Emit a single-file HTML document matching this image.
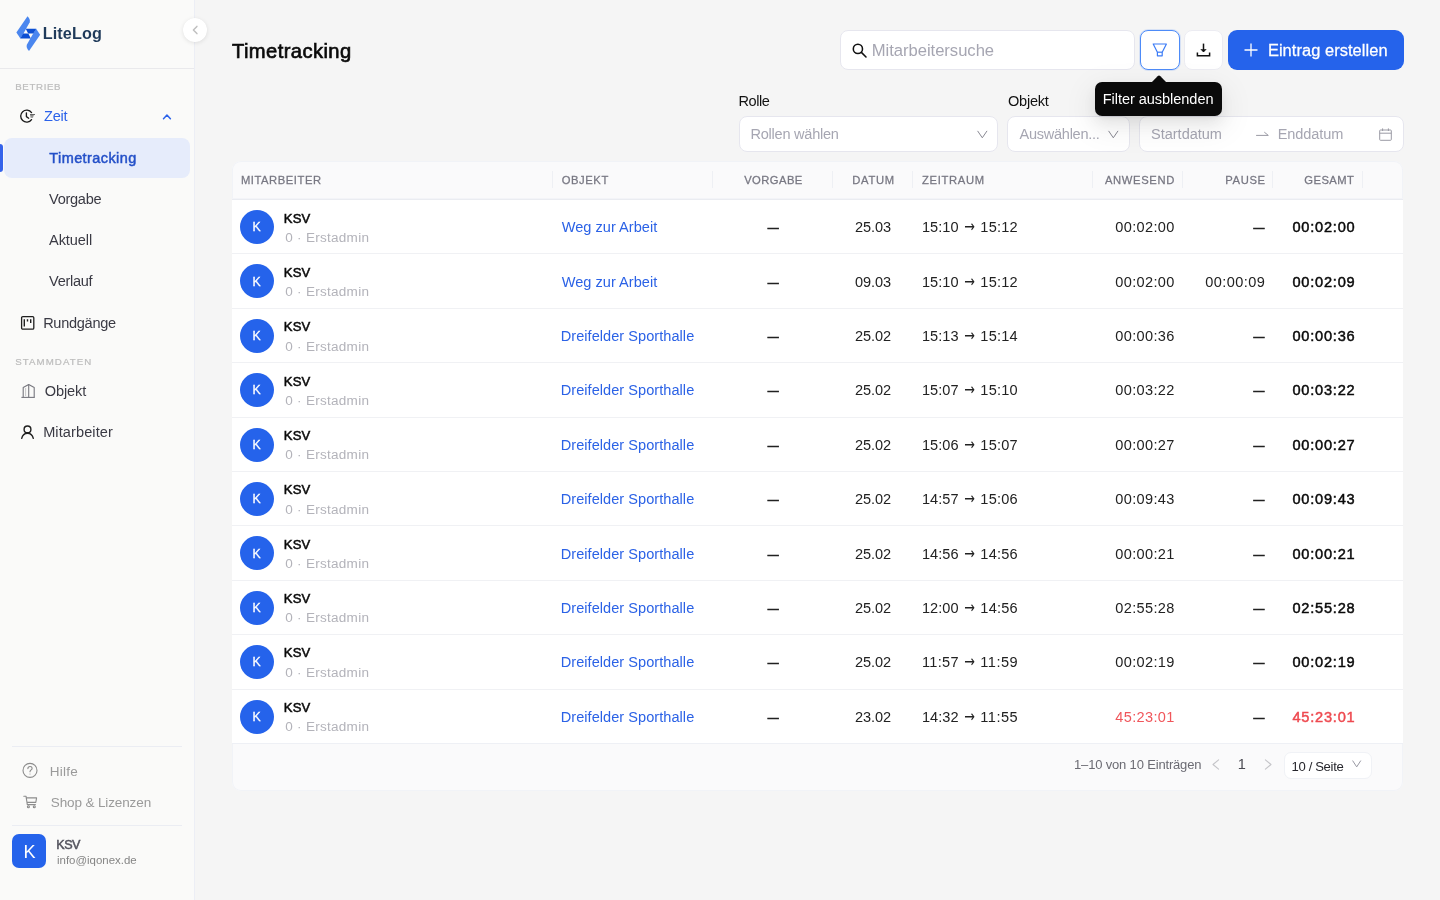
<!DOCTYPE html>
<html lang="de">
<head>
<meta charset="utf-8">
<title>LiteLog – Timetracking</title>
<style>

*{box-sizing:border-box;margin:0;padding:0}
html,body{width:1440px;height:900px;overflow:hidden}
body{position:relative;background:#f5f5f5;font-family:"Liberation Sans",sans-serif;color:#111}
.t{position:absolute;white-space:pre;display:block;font-weight:400}
.a{position:absolute;display:block}
svg{position:absolute;display:block;overflow:visible}
.sbg{position:absolute;left:0;top:0;width:195px;height:900px;background:#fafaf9;border-right:1px solid #eceef5}
aside,header,section,main{position:absolute;left:0;top:0;width:1440px;height:900px;will-change:transform}
.hr{position:absolute;height:1px;background:#ebedf3}
.box{position:absolute;background:#fff;border:1px solid #e6e6ee;border-radius:8px}

</style>
</head>
<body>
<div class="sbg"></div>
<aside>
<svg style="left:10px;top:10px" width="100" height="50" viewBox="0 0 1440 720" aria-hidden="true">
<path d="M252,90 Q296,130 284,178 L192,343 L150,410 L92,325 Z" fill="#4a86ef"/>
<path d="M274,590 Q230,550 242,502 L334,337 L376,270 L434,355 Z" fill="#4a86ef"/>
<path d="M226,270 L378,270 L336,340 L262,340 Z" fill="#0d4fd3"/>
<path d="M300,410 L148,410 L190,340 L264,340 Z" fill="#0d4fd3"/>
</svg>
<span class="t" style="left:42.65px;top:22.00px;font-size:16.22px;line-height:23px;color:#1f3a5a;font-weight:700;letter-spacing:0.133px;">LiteLog</span>
<div class="hr" style="left:0;top:68px;width:194px;background:#e9e9ec"></div>
<span class="t" style="left:15.16px;top:80.00px;font-size:9.7px;line-height:14px;color:#bdbdbd;-webkit-text-stroke:0.23px;letter-spacing:0.663px;">BETRIEB</span>
<svg style="left:19px;top:108px" width="16" height="16" viewBox="0 0 16 16" fill="none" stroke="#1a1a1a" stroke-width="1.35" stroke-linecap="round" aria-hidden="true">
<path d="M12.55,4.57 A6,6 0 1 0 12.55,11.63"/>
<path d="M7.4,4.8 V8.6 L9.7,10.2" stroke-linejoin="round"/>
<path d="M11.4,6.55 H15.6 M11.6,7.8 H14.3 M11.9,9.05 H13.7" stroke-width="0.8" stroke="#333"/>
</svg>
<span class="t" style="left:44.05px;top:106.00px;font-size:14.56px;line-height:20px;color:#2b62ea;letter-spacing:-0.269px;">Zeit</span>
<svg style="left:162px;top:113px" width="10" height="8" viewBox="0 0 10 8" fill="none" stroke="#2b62ea" stroke-width="1.5" stroke-linecap="round" stroke-linejoin="round" aria-hidden="true"><path d="M1.5,5.7 L4.95,2.0 L8.4,5.7"/></svg>
<div class="a" style="left:4px;top:138px;width:186px;height:40px;border-radius:8px;background:#e6ecfb"></div>
<div class="a" style="left:0;top:144px;width:3px;height:28px;border-radius:0 3px 3px 0;background:#3563ea"></div>
<span class="t" style="left:49.29px;top:148.00px;font-size:14.49px;line-height:20px;color:#2450c8;-webkit-text-stroke:0.47px;letter-spacing:0.419px;">Timetracking</span>
<span class="t" style="left:49.05px;top:189.00px;font-size:14.56px;line-height:20px;color:#3a3a44;letter-spacing:-0.285px;">Vorgabe</span>
<span class="t" style="left:49.05px;top:230.00px;font-size:14.56px;line-height:20px;color:#3a3a44;letter-spacing:-0.090px;">Aktuell</span>
<span class="t" style="left:49.05px;top:271.00px;font-size:14.56px;line-height:20px;color:#3a3a44;letter-spacing:-0.309px;">Verlauf</span>
<svg style="left:20px;top:315px" width="16" height="16" viewBox="0 0 16 16" fill="none" stroke="#1f1f1f" stroke-width="1.3" aria-hidden="true">
<rect x="1.6" y="1.6" width="12.2" height="12.6" rx="1.2"/>
<path d="M4.3,4.2 V11.6 M7.5,4.2 V6.6 M10.7,4.2 V8" stroke-width="1.4"/>
</svg>
<span class="t" style="left:43.15px;top:313.00px;font-size:14.56px;line-height:20px;color:#3a3a44;letter-spacing:-0.281px;">Rundgänge</span>
<span class="t" style="left:15.26px;top:355.00px;font-size:9.7px;line-height:14px;color:#bdbdbd;-webkit-text-stroke:0.23px;letter-spacing:1.066px;">STAMMDATEN</span>
<svg style="left:20px;top:383px" width="16" height="16" viewBox="0 0 16 16" fill="none" stroke="#77777f" stroke-width="1.1" stroke-linejoin="round" aria-hidden="true">
<path d="M1.4,14.4 H14.8"/>
<path d="M3.2,14.2 V4.6 L8.7,1.6 L14.2,4.6 V14.2"/>
<path d="M8.7,1.4 V14.2"/>
<path d="M5.6,5.5 V13" stroke-dasharray="1 1" stroke-width="0.8"/>
</svg>
<span class="t" style="left:44.85px;top:381.00px;font-size:14.56px;line-height:20px;color:#3a3a44;letter-spacing:-0.121px;">Objekt</span>
<svg style="left:20px;top:424px" width="16" height="16" viewBox="0 0 16 16" fill="none" stroke="#1f1f1f" stroke-width="1.4" stroke-linecap="round" aria-hidden="true">
<circle cx="7.5" cy="5.4" r="3.4"/>
<path d="M1.7,14.3 C2.6,10.6 5,9.2 7.5,9.2 C10,9.2 12.4,10.6 13.3,14.3"/>
</svg>
<span class="t" style="left:43.15px;top:422.00px;font-size:14.56px;line-height:20px;color:#3a3a44;letter-spacing:0.103px;">Mitarbeiter</span>
<div class="hr" style="left:12px;top:746px;width:170px"></div>
<svg style="left:22px;top:762px" width="16" height="16" viewBox="0 0 16 16" fill="none" stroke="#8c8c8c" stroke-width="1.1" stroke-linecap="round" aria-hidden="true">
<circle cx="8" cy="8.4" r="7"/>
<path d="M5.9,6.6 C5.9,5.2 6.9,4.5 8,4.5 C9.2,4.5 10.1,5.3 10.1,6.4 C10.1,7.9 8,8 8,9.8"/>
<circle cx="8" cy="12" r="0.5" fill="#8c8c8c" stroke="none"/>
</svg>
<span class="t" style="left:49.75px;top:762.00px;font-size:13.52px;line-height:19px;color:#9a9a9a;letter-spacing:0.217px;">Hilfe</span>
<svg style="left:23px;top:795px" width="15" height="14" viewBox="0 0 15 14" fill="none" stroke="#8c8c8c" stroke-width="1.1" stroke-linecap="round" stroke-linejoin="round" aria-hidden="true">
<path d="M0.8,1.2 H3 L4.3,9.6 H12.4 M3.4,2.9 H13.6 L12.8,7.4 H4.1"/>
<circle cx="5.4" cy="11.8" r="1" />
<circle cx="11.3" cy="11.8" r="1" />
</svg>
<span class="t" style="left:50.75px;top:793.00px;font-size:13.52px;line-height:19px;color:#9a9a9a;letter-spacing:-0.128px;">Shop &amp; Lizenzen</span>
<div class="hr" style="left:12px;top:825px;width:170px"></div>
<div class="a" style="left:12px;top:834px;width:34px;height:34px;border-radius:7px;background:#2563eb"></div>
<span class="t" style="left:23.45px;top:840.00px;font-size:18.1px;line-height:25px;color:#fff;">K</span>
<span class="t" style="left:56.30px;top:836.00px;font-size:12.6px;line-height:18px;color:#54545e;-webkit-text-stroke:0.5px;letter-spacing:-0.552px;">KSV</span>
<span class="t" style="left:57.05px;top:852.00px;font-size:11.44px;line-height:16px;color:#858585;letter-spacing:-0.007px;">info@iqonex.de</span>
</aside>
<div class="a" style="left:183px;top:18px;width:24px;height:24px;border-radius:50%;background:#fff;box-shadow:0 1px 4px rgba(0,0,0,.10),0 0 1px rgba(0,0,0,.06)"></div>
<svg style="left:191px;top:25px" width="7" height="10" viewBox="0 0 7 10" fill="none" stroke="#c0c0c0" stroke-width="1.5" stroke-linecap="round" stroke-linejoin="round" aria-hidden="true"><path d="M5.9,1.4 L2.4,5 L5.9,8.6"/></svg>
<header>
<h1 class="t" style="left:231.98px;top:37.00px;font-size:20.17px;line-height:28px;color:#0a0a0a;-webkit-text-stroke:0.66px;letter-spacing:0.420px;">Timetracking</h1>
<div class="box" style="left:840px;top:30px;width:295px;height:40px;border-color:#e6e6ee"></div>
<svg style="left:852px;top:43px" width="15" height="15" viewBox="0 0 15 15" fill="none" stroke="#111" stroke-width="1.55" stroke-linecap="round" aria-hidden="true">
<circle cx="5.9" cy="5.9" r="4.6"/><path d="M9.4,9.4 L14,14"/></svg>
<span class="t" style="left:871.75px;top:39.00px;font-size:16.64px;line-height:23px;color:#a6a6b2;letter-spacing:-0.037px;">Mitarbeitersuche</span>
<div class="box" style="left:1140px;top:30px;width:40px;height:40px;border-color:#4d8bf8;box-shadow:0 0 0 1px rgba(77,139,248,.18)"></div>
<svg style="left:1152px;top:43px" width="16" height="14" viewBox="0 0 16 14" fill="none" stroke="#3b7bf6" stroke-width="1.2" stroke-linejoin="round" aria-hidden="true">
<path d="M1.2,1 H14.4 L10.2,9.2 V12.8 H5.4 V9.2 Z"/><path d="M5.4,9.2 H10.2"/></svg>
<div class="box" style="left:1184px;top:30px;width:39px;height:40px;border-color:#ececf2"></div>
<svg style="left:1196px;top:43px" width="15" height="14" viewBox="0 0 15 14" fill="none" stroke="#111" stroke-width="1.5" aria-hidden="true">
<path d="M7.5,0.6 V8.4"/><path d="M4.9,6.2 L7.5,8.9 L10.1,6.2" fill="#111" stroke-width="1"/><path d="M1.4,9.4 V12.8 H13.6 V9.4" stroke-width="1.5"/></svg>
<div class="a" style="left:1227.6px;top:30px;width:176.3px;height:40px;border-radius:9px;background:#2563eb"></div>
<svg style="left:1244px;top:43px" width="14" height="14" viewBox="0 0 14 14" stroke="#fff" stroke-width="1.3" aria-hidden="true"><path d="M7,0.5 V13.5 M0.5,7 H13.5"/></svg>
<span class="t" style="left:1267.88px;top:39.00px;font-size:16.44px;line-height:23px;color:#fff;-webkit-text-stroke:0.26px;letter-spacing:0.056px;">Eintrag erstellen</span>
</header>
<section>
<span class="t" style="left:738.45px;top:91.00px;font-size:14.56px;line-height:20px;color:#111;letter-spacing:-0.416px;">Rolle</span>
<span class="t" style="left:1007.95px;top:91.00px;font-size:14.56px;line-height:20px;color:#111;letter-spacing:-0.221px;">Objekt</span>
<div class="box" style="left:738.6px;top:116px;width:259px;height:36px;border-color:#e6e6ee"></div>
<span class="t" style="left:750.45px;top:124.00px;font-size:14.56px;line-height:20px;color:#a6a6b2;letter-spacing:-0.242px;">Rollen wählen</span>
<svg style="left:976.5px;top:130px" width="11" height="9" viewBox="0 0 11 9" fill="none" stroke="#8a8a94" stroke-width="1" stroke-linecap="round" stroke-linejoin="round" aria-hidden="true"><path d="M0.8,1.2 L5.3,7.8 L9.8,1.2"/></svg>
<div class="box" style="left:1007px;top:116px;width:122.5px;height:36px;border-color:#e6e6ee"></div>
<span class="t" style="left:1019.45px;top:124.00px;font-size:14.56px;line-height:20px;color:#a6a6b2;letter-spacing:-0.260px;">Auswählen...</span>
<svg style="left:1108px;top:130px" width="11" height="9" viewBox="0 0 11 9" fill="none" stroke="#8a8a94" stroke-width="1" stroke-linecap="round" stroke-linejoin="round" aria-hidden="true"><path d="M0.8,1.2 L5.3,7.8 L9.8,1.2"/></svg>
<div class="box" style="left:1138.5px;top:116px;width:265.5px;height:36px;border-color:#e6e6ee"></div>
<span class="t" style="left:1151.05px;top:124.00px;font-size:14.56px;line-height:20px;color:#a6a6b2;letter-spacing:-0.027px;">Startdatum</span>
<svg style="left:1256px;top:130px" width="13" height="8" viewBox="0 0 13 8" fill="none" stroke="#9a9aa4" stroke-width="1" stroke-linecap="round" aria-hidden="true"><path d="M0.5,5.4 H12.3 L8.6,2.4"/></svg>
<span class="t" style="left:1277.75px;top:124.00px;font-size:14.56px;line-height:20px;color:#a6a6b2;letter-spacing:-0.116px;">Enddatum</span>
<svg style="left:1379px;top:127.5px" width="13" height="13" viewBox="0 0 13 13" fill="none" stroke="#9a9aa4" stroke-width="1" aria-hidden="true"><rect x="0.7" y="2" width="11.6" height="10.3" rx="0.8"/><path d="M0.7,5.2 H12.3 M3.6,0.4 V3 M9.4,0.4 V3"/></svg>
<div class="a" style="left:1095px;top:82px;width:127px;height:34px;border-radius:7px;background:#0a0a0a;box-shadow:0 6px 16px 0 rgba(0,0,0,.08),0 3px 6px -4px rgba(0,0,0,.12),0 9px 28px 8px rgba(0,0,0,.05)"></div>
<svg style="left:1151px;top:75px" width="16" height="8" viewBox="0 0 16 8" aria-hidden="true"><path d="M0,8 L6.6,1.2 Q8,0 9.4,1.2 L16,8 Z" fill="#0a0a0a"/></svg>
<span class="t" style="left:1102.75px;top:89.00px;font-size:14.56px;line-height:20px;color:#fff;letter-spacing:-0.051px;">Filter ausblenden</span>
</section>
<main>
<div class="a" style="left:232px;top:161px;width:1171px;height:630px;border-radius:9px;background:#fafafb;overflow:hidden;box-shadow:inset 0 0 0 1px #f1f3f7">
<div class="a" style="left:0;top:37px;width:1171px;height:1px;background:#f3f4f8"></div>
<div class="a" style="left:0;top:38px;width:1171px;height:545px;background:#fff;border-top:1px solid #eaecf1;border-bottom:1px solid #eef0f5"></div>
<div class="a" style="left:0;top:92px;width:1171px;height:1px;background:#f0f1f4"></div>
<div class="a" style="left:0;top:147px;width:1171px;height:1px;background:#f0f1f4"></div>
<div class="a" style="left:0;top:201px;width:1171px;height:1px;background:#f0f1f4"></div>
<div class="a" style="left:0;top:256px;width:1171px;height:1px;background:#f0f1f4"></div>
<div class="a" style="left:0;top:310px;width:1171px;height:1px;background:#f0f1f4"></div>
<div class="a" style="left:0;top:364px;width:1171px;height:1px;background:#f0f1f4"></div>
<div class="a" style="left:0;top:419px;width:1171px;height:1px;background:#f0f1f4"></div>
<div class="a" style="left:0;top:473px;width:1171px;height:1px;background:#f0f1f4"></div>
<div class="a" style="left:0;top:528px;width:1171px;height:1px;background:#f0f1f4"></div>
<div class="a" style="left:320px;top:10px;width:1px;height:17px;background:#eef0f4"></div>
<div class="a" style="left:480px;top:10px;width:1px;height:17px;background:#eef0f4"></div>
<div class="a" style="left:600px;top:10px;width:1px;height:17px;background:#eef0f4"></div>
<div class="a" style="left:680px;top:10px;width:1px;height:17px;background:#eef0f4"></div>
<div class="a" style="left:860px;top:10px;width:1px;height:17px;background:#eef0f4"></div>
<div class="a" style="left:950px;top:10px;width:1px;height:17px;background:#eef0f4"></div>
<div class="a" style="left:1040px;top:10px;width:1px;height:17px;background:#eef0f4"></div>
<div class="a" style="left:1130px;top:10px;width:1px;height:17px;background:#eef0f4"></div>
</div>
<span class="t" style="left:240.88px;top:172.00px;font-size:11.23px;line-height:16px;color:#777782;-webkit-text-stroke:0.26px;letter-spacing:0.565px;">MITARBEITER</span>
<span class="t" style="left:561.78px;top:172.00px;font-size:11.23px;line-height:16px;color:#777782;-webkit-text-stroke:0.26px;letter-spacing:0.570px;">OBJEKT</span>
<span class="t" style="left:744.13px;top:172.00px;font-size:11.23px;line-height:16px;color:#777782;-webkit-text-stroke:0.26px;letter-spacing:0.454px;">VORGABE</span>
<span class="t" style="left:852.13px;top:172.00px;font-size:11.23px;line-height:16px;color:#777782;-webkit-text-stroke:0.26px;letter-spacing:0.756px;">DATUM</span>
<span class="t" style="left:922.08px;top:172.00px;font-size:11.23px;line-height:16px;color:#777782;-webkit-text-stroke:0.26px;letter-spacing:0.663px;">ZEITRAUM</span>
<span class="t" style="left:1104.93px;top:172.00px;font-size:11.23px;line-height:16px;color:#777782;-webkit-text-stroke:0.26px;letter-spacing:0.645px;">ANWESEND</span>
<span class="t" style="left:1225.33px;top:172.00px;font-size:11.23px;line-height:16px;color:#777782;-webkit-text-stroke:0.26px;letter-spacing:0.630px;">PAUSE</span>
<span class="t" style="left:1304.33px;top:172.00px;font-size:11.23px;line-height:16px;color:#777782;-webkit-text-stroke:0.26px;letter-spacing:0.444px;">GESAMT</span>
<div class="a" style="left:240px;top:210.0px;width:34px;height:34px;border-radius:50%;background:#2563eb"></div>
<span class="t" style="left:252.50px;top:219.00px;font-size:12.25px;line-height:17px;color:#fff;-webkit-text-stroke:0.29px;">K</span>
<span class="t" style="left:283.71px;top:210.00px;font-size:13.1px;line-height:18px;color:#0a0a0a;-webkit-text-stroke:0.52px;letter-spacing:0.205px;">KSV</span>
<span class="t" style="left:285.25px;top:228.00px;font-size:13.52px;line-height:19px;color:#b3b3ba;letter-spacing:0.278px;">0 · Erstadmin</span>
<span class="t" style="left:561.75px;top:217.00px;font-size:14.56px;line-height:20px;color:#2b62e6;letter-spacing:0.023px;">Weg zur Arbeit</span>
<span class="t" style="left:765.55px;top:217.00px;font-size:14.56px;line-height:20px;color:#222;-webkit-text-stroke:.3px;transform:translateY(-.5px) scaleX(.78);">—</span>
<span class="t" style="left:855.00px;top:217.00px;font-size:14.56px;line-height:20px;color:#222;letter-spacing:-0.079px;">25.03</span>
<span class="t" style="left:921.95px;top:217.00px;font-size:14.56px;line-height:20px;color:#222;letter-spacing:0.071px;">15:10</span>
<span class="t" style="left:963.30px;top:216.00px;font-size:16.02px;line-height:22px;color:#222;font-family:'DejaVu Sans',sans-serif;transform:translateY(.3px) scaleX(.8);">→</span>
<span class="t" style="left:980.30px;top:217.00px;font-size:14.56px;line-height:20px;color:#222;letter-spacing:0.246px;">15:12</span>
<span class="t" style="left:1115.30px;top:217.00px;font-size:14.56px;line-height:20px;color:#222;letter-spacing:0.352px;">00:02:00</span>
<span class="t" style="left:1250.00px;top:217.00px;font-size:14.56px;line-height:20px;color:#222;-webkit-text-stroke:.3px;transform:translateY(-.5px) scaleX(.78);transform-origin:right;">—</span>
<span class="t" style="left:1292.44px;top:217.00px;font-size:14.6px;line-height:20px;color:#0a0a0a;-webkit-text-stroke:0.48px;letter-spacing:0.775px;">00:02:00</span>
<div class="a" style="left:240px;top:264.4px;width:34px;height:34px;border-radius:50%;background:#2563eb"></div>
<span class="t" style="left:252.50px;top:274.00px;font-size:12.25px;line-height:17px;color:#fff;-webkit-text-stroke:0.29px;">K</span>
<span class="t" style="left:283.71px;top:264.00px;font-size:13.1px;line-height:18px;color:#0a0a0a;-webkit-text-stroke:0.52px;letter-spacing:0.205px;">KSV</span>
<span class="t" style="left:285.25px;top:282.00px;font-size:13.52px;line-height:19px;color:#b3b3ba;letter-spacing:0.278px;">0 · Erstadmin</span>
<span class="t" style="left:561.75px;top:272.00px;font-size:14.56px;line-height:20px;color:#2b62e6;letter-spacing:0.023px;">Weg zur Arbeit</span>
<span class="t" style="left:765.55px;top:272.00px;font-size:14.56px;line-height:20px;color:#222;-webkit-text-stroke:.3px;transform:translateY(-.5px) scaleX(.78);">—</span>
<span class="t" style="left:855.00px;top:272.00px;font-size:14.56px;line-height:20px;color:#222;letter-spacing:-0.079px;">09.03</span>
<span class="t" style="left:921.95px;top:272.00px;font-size:14.56px;line-height:20px;color:#222;letter-spacing:0.071px;">15:10</span>
<span class="t" style="left:963.30px;top:271.00px;font-size:16.02px;line-height:22px;color:#222;font-family:'DejaVu Sans',sans-serif;transform:translateY(.3px) scaleX(.8);">→</span>
<span class="t" style="left:980.30px;top:272.00px;font-size:14.56px;line-height:20px;color:#222;letter-spacing:0.246px;">15:12</span>
<span class="t" style="left:1115.30px;top:272.00px;font-size:14.56px;line-height:20px;color:#222;letter-spacing:0.352px;">00:02:00</span>
<span class="t" style="left:1205.20px;top:272.00px;font-size:14.56px;line-height:20px;color:#222;letter-spacing:0.438px;">00:00:09</span>
<span class="t" style="left:1292.44px;top:272.00px;font-size:14.6px;line-height:20px;color:#0a0a0a;-webkit-text-stroke:0.48px;letter-spacing:0.775px;">00:02:09</span>
<div class="a" style="left:240px;top:318.8px;width:34px;height:34px;border-radius:50%;background:#2563eb"></div>
<span class="t" style="left:252.50px;top:328.00px;font-size:12.25px;line-height:17px;color:#fff;-webkit-text-stroke:0.29px;">K</span>
<span class="t" style="left:283.71px;top:318.00px;font-size:13.1px;line-height:18px;color:#0a0a0a;-webkit-text-stroke:0.52px;letter-spacing:0.205px;">KSV</span>
<span class="t" style="left:285.25px;top:337.00px;font-size:13.52px;line-height:19px;color:#b3b3ba;letter-spacing:0.278px;">0 · Erstadmin</span>
<span class="t" style="left:560.75px;top:326.00px;font-size:14.56px;line-height:20px;color:#2b62e6;letter-spacing:0.044px;">Dreifelder Sporthalle</span>
<span class="t" style="left:765.55px;top:326.00px;font-size:14.56px;line-height:20px;color:#222;-webkit-text-stroke:.3px;transform:translateY(-.5px) scaleX(.78);">—</span>
<span class="t" style="left:855.00px;top:326.00px;font-size:14.56px;line-height:20px;color:#222;letter-spacing:-0.079px;">25.02</span>
<span class="t" style="left:921.95px;top:326.00px;font-size:14.56px;line-height:20px;color:#222;letter-spacing:0.071px;">15:13</span>
<span class="t" style="left:963.30px;top:325.00px;font-size:16.02px;line-height:22px;color:#222;font-family:'DejaVu Sans',sans-serif;transform:translateY(.3px) scaleX(.8);">→</span>
<span class="t" style="left:980.30px;top:326.00px;font-size:14.56px;line-height:20px;color:#222;letter-spacing:0.246px;">15:14</span>
<span class="t" style="left:1115.30px;top:326.00px;font-size:14.56px;line-height:20px;color:#222;letter-spacing:0.352px;">00:00:36</span>
<span class="t" style="left:1250.00px;top:326.00px;font-size:14.56px;line-height:20px;color:#222;-webkit-text-stroke:.3px;transform:translateY(-.5px) scaleX(.78);transform-origin:right;">—</span>
<span class="t" style="left:1292.44px;top:326.00px;font-size:14.6px;line-height:20px;color:#0a0a0a;-webkit-text-stroke:0.48px;letter-spacing:0.775px;">00:00:36</span>
<div class="a" style="left:240px;top:373.2px;width:34px;height:34px;border-radius:50%;background:#2563eb"></div>
<span class="t" style="left:252.50px;top:382.00px;font-size:12.25px;line-height:17px;color:#fff;-webkit-text-stroke:0.29px;">K</span>
<span class="t" style="left:283.71px;top:373.00px;font-size:13.1px;line-height:18px;color:#0a0a0a;-webkit-text-stroke:0.52px;letter-spacing:0.205px;">KSV</span>
<span class="t" style="left:285.25px;top:391.00px;font-size:13.52px;line-height:19px;color:#b3b3ba;letter-spacing:0.278px;">0 · Erstadmin</span>
<span class="t" style="left:560.75px;top:380.00px;font-size:14.56px;line-height:20px;color:#2b62e6;letter-spacing:0.044px;">Dreifelder Sporthalle</span>
<span class="t" style="left:765.55px;top:380.00px;font-size:14.56px;line-height:20px;color:#222;-webkit-text-stroke:.3px;transform:translateY(-.5px) scaleX(.78);">—</span>
<span class="t" style="left:855.00px;top:380.00px;font-size:14.56px;line-height:20px;color:#222;letter-spacing:-0.079px;">25.02</span>
<span class="t" style="left:921.95px;top:380.00px;font-size:14.56px;line-height:20px;color:#222;letter-spacing:0.071px;">15:07</span>
<span class="t" style="left:963.30px;top:379.00px;font-size:16.02px;line-height:22px;color:#222;font-family:'DejaVu Sans',sans-serif;transform:translateY(.3px) scaleX(.8);">→</span>
<span class="t" style="left:980.30px;top:380.00px;font-size:14.56px;line-height:20px;color:#222;letter-spacing:0.246px;">15:10</span>
<span class="t" style="left:1115.30px;top:380.00px;font-size:14.56px;line-height:20px;color:#222;letter-spacing:0.352px;">00:03:22</span>
<span class="t" style="left:1250.00px;top:380.00px;font-size:14.56px;line-height:20px;color:#222;-webkit-text-stroke:.3px;transform:translateY(-.5px) scaleX(.78);transform-origin:right;">—</span>
<span class="t" style="left:1292.44px;top:380.00px;font-size:14.6px;line-height:20px;color:#0a0a0a;-webkit-text-stroke:0.48px;letter-spacing:0.775px;">00:03:22</span>
<div class="a" style="left:240px;top:427.6px;width:34px;height:34px;border-radius:50%;background:#2563eb"></div>
<span class="t" style="left:252.50px;top:437.00px;font-size:12.25px;line-height:17px;color:#fff;-webkit-text-stroke:0.29px;">K</span>
<span class="t" style="left:283.71px;top:427.00px;font-size:13.1px;line-height:18px;color:#0a0a0a;-webkit-text-stroke:0.52px;letter-spacing:0.205px;">KSV</span>
<span class="t" style="left:285.25px;top:445.00px;font-size:13.52px;line-height:19px;color:#b3b3ba;letter-spacing:0.278px;">0 · Erstadmin</span>
<span class="t" style="left:560.75px;top:435.00px;font-size:14.56px;line-height:20px;color:#2b62e6;letter-spacing:0.044px;">Dreifelder Sporthalle</span>
<span class="t" style="left:765.55px;top:435.00px;font-size:14.56px;line-height:20px;color:#222;-webkit-text-stroke:.3px;transform:translateY(-.5px) scaleX(.78);">—</span>
<span class="t" style="left:855.00px;top:435.00px;font-size:14.56px;line-height:20px;color:#222;letter-spacing:-0.079px;">25.02</span>
<span class="t" style="left:921.95px;top:435.00px;font-size:14.56px;line-height:20px;color:#222;letter-spacing:0.071px;">15:06</span>
<span class="t" style="left:963.30px;top:434.00px;font-size:16.02px;line-height:22px;color:#222;font-family:'DejaVu Sans',sans-serif;transform:translateY(.3px) scaleX(.8);">→</span>
<span class="t" style="left:980.30px;top:435.00px;font-size:14.56px;line-height:20px;color:#222;letter-spacing:0.246px;">15:07</span>
<span class="t" style="left:1115.30px;top:435.00px;font-size:14.56px;line-height:20px;color:#222;letter-spacing:0.352px;">00:00:27</span>
<span class="t" style="left:1250.00px;top:435.00px;font-size:14.56px;line-height:20px;color:#222;-webkit-text-stroke:.3px;transform:translateY(-.5px) scaleX(.78);transform-origin:right;">—</span>
<span class="t" style="left:1292.44px;top:435.00px;font-size:14.6px;line-height:20px;color:#0a0a0a;-webkit-text-stroke:0.48px;letter-spacing:0.775px;">00:00:27</span>
<div class="a" style="left:240px;top:482.0px;width:34px;height:34px;border-radius:50%;background:#2563eb"></div>
<span class="t" style="left:252.50px;top:491.00px;font-size:12.25px;line-height:17px;color:#fff;-webkit-text-stroke:0.29px;">K</span>
<span class="t" style="left:283.71px;top:481.00px;font-size:13.1px;line-height:18px;color:#0a0a0a;-webkit-text-stroke:0.52px;letter-spacing:0.205px;">KSV</span>
<span class="t" style="left:285.25px;top:500.00px;font-size:13.52px;line-height:19px;color:#b3b3ba;letter-spacing:0.278px;">0 · Erstadmin</span>
<span class="t" style="left:560.75px;top:489.00px;font-size:14.56px;line-height:20px;color:#2b62e6;letter-spacing:0.044px;">Dreifelder Sporthalle</span>
<span class="t" style="left:765.55px;top:489.00px;font-size:14.56px;line-height:20px;color:#222;-webkit-text-stroke:.3px;transform:translateY(-.5px) scaleX(.78);">—</span>
<span class="t" style="left:855.00px;top:489.00px;font-size:14.56px;line-height:20px;color:#222;letter-spacing:-0.079px;">25.02</span>
<span class="t" style="left:921.95px;top:489.00px;font-size:14.56px;line-height:20px;color:#222;letter-spacing:0.071px;">14:57</span>
<span class="t" style="left:963.30px;top:488.00px;font-size:16.02px;line-height:22px;color:#222;font-family:'DejaVu Sans',sans-serif;transform:translateY(.3px) scaleX(.8);">→</span>
<span class="t" style="left:980.30px;top:489.00px;font-size:14.56px;line-height:20px;color:#222;letter-spacing:0.246px;">15:06</span>
<span class="t" style="left:1115.30px;top:489.00px;font-size:14.56px;line-height:20px;color:#222;letter-spacing:0.352px;">00:09:43</span>
<span class="t" style="left:1250.00px;top:489.00px;font-size:14.56px;line-height:20px;color:#222;-webkit-text-stroke:.3px;transform:translateY(-.5px) scaleX(.78);transform-origin:right;">—</span>
<span class="t" style="left:1292.44px;top:489.00px;font-size:14.6px;line-height:20px;color:#0a0a0a;-webkit-text-stroke:0.48px;letter-spacing:0.775px;">00:09:43</span>
<div class="a" style="left:240px;top:536.4px;width:34px;height:34px;border-radius:50%;background:#2563eb"></div>
<span class="t" style="left:252.50px;top:546.00px;font-size:12.25px;line-height:17px;color:#fff;-webkit-text-stroke:0.29px;">K</span>
<span class="t" style="left:283.71px;top:536.00px;font-size:13.1px;line-height:18px;color:#0a0a0a;-webkit-text-stroke:0.52px;letter-spacing:0.205px;">KSV</span>
<span class="t" style="left:285.25px;top:554.00px;font-size:13.52px;line-height:19px;color:#b3b3ba;letter-spacing:0.278px;">0 · Erstadmin</span>
<span class="t" style="left:560.75px;top:544.00px;font-size:14.56px;line-height:20px;color:#2b62e6;letter-spacing:0.044px;">Dreifelder Sporthalle</span>
<span class="t" style="left:765.55px;top:544.00px;font-size:14.56px;line-height:20px;color:#222;-webkit-text-stroke:.3px;transform:translateY(-.5px) scaleX(.78);">—</span>
<span class="t" style="left:855.00px;top:544.00px;font-size:14.56px;line-height:20px;color:#222;letter-spacing:-0.079px;">25.02</span>
<span class="t" style="left:921.95px;top:544.00px;font-size:14.56px;line-height:20px;color:#222;letter-spacing:0.071px;">14:56</span>
<span class="t" style="left:963.30px;top:543.00px;font-size:16.02px;line-height:22px;color:#222;font-family:'DejaVu Sans',sans-serif;transform:translateY(.3px) scaleX(.8);">→</span>
<span class="t" style="left:980.30px;top:544.00px;font-size:14.56px;line-height:20px;color:#222;letter-spacing:0.246px;">14:56</span>
<span class="t" style="left:1115.30px;top:544.00px;font-size:14.56px;line-height:20px;color:#222;letter-spacing:0.352px;">00:00:21</span>
<span class="t" style="left:1250.00px;top:544.00px;font-size:14.56px;line-height:20px;color:#222;-webkit-text-stroke:.3px;transform:translateY(-.5px) scaleX(.78);transform-origin:right;">—</span>
<span class="t" style="left:1292.44px;top:544.00px;font-size:14.6px;line-height:20px;color:#0a0a0a;-webkit-text-stroke:0.48px;letter-spacing:0.775px;">00:00:21</span>
<div class="a" style="left:240px;top:590.8px;width:34px;height:34px;border-radius:50%;background:#2563eb"></div>
<span class="t" style="left:252.50px;top:600.00px;font-size:12.25px;line-height:17px;color:#fff;-webkit-text-stroke:0.29px;">K</span>
<span class="t" style="left:283.71px;top:590.00px;font-size:13.1px;line-height:18px;color:#0a0a0a;-webkit-text-stroke:0.52px;letter-spacing:0.205px;">KSV</span>
<span class="t" style="left:285.25px;top:608.00px;font-size:13.52px;line-height:19px;color:#b3b3ba;letter-spacing:0.278px;">0 · Erstadmin</span>
<span class="t" style="left:560.75px;top:598.00px;font-size:14.56px;line-height:20px;color:#2b62e6;letter-spacing:0.044px;">Dreifelder Sporthalle</span>
<span class="t" style="left:765.55px;top:598.00px;font-size:14.56px;line-height:20px;color:#222;-webkit-text-stroke:.3px;transform:translateY(-.5px) scaleX(.78);">—</span>
<span class="t" style="left:855.00px;top:598.00px;font-size:14.56px;line-height:20px;color:#222;letter-spacing:-0.079px;">25.02</span>
<span class="t" style="left:921.95px;top:598.00px;font-size:14.56px;line-height:20px;color:#222;letter-spacing:0.071px;">12:00</span>
<span class="t" style="left:963.30px;top:597.00px;font-size:16.02px;line-height:22px;color:#222;font-family:'DejaVu Sans',sans-serif;transform:translateY(.3px) scaleX(.8);">→</span>
<span class="t" style="left:980.30px;top:598.00px;font-size:14.56px;line-height:20px;color:#222;letter-spacing:0.246px;">14:56</span>
<span class="t" style="left:1115.30px;top:598.00px;font-size:14.56px;line-height:20px;color:#222;letter-spacing:0.352px;">02:55:28</span>
<span class="t" style="left:1250.00px;top:598.00px;font-size:14.56px;line-height:20px;color:#222;-webkit-text-stroke:.3px;transform:translateY(-.5px) scaleX(.78);transform-origin:right;">—</span>
<span class="t" style="left:1292.44px;top:598.00px;font-size:14.6px;line-height:20px;color:#0a0a0a;-webkit-text-stroke:0.48px;letter-spacing:0.775px;">02:55:28</span>
<div class="a" style="left:240px;top:645.2px;width:34px;height:34px;border-radius:50%;background:#2563eb"></div>
<span class="t" style="left:252.50px;top:654.00px;font-size:12.25px;line-height:17px;color:#fff;-webkit-text-stroke:0.29px;">K</span>
<span class="t" style="left:283.71px;top:644.00px;font-size:13.1px;line-height:18px;color:#0a0a0a;-webkit-text-stroke:0.52px;letter-spacing:0.205px;">KSV</span>
<span class="t" style="left:285.25px;top:663.00px;font-size:13.52px;line-height:19px;color:#b3b3ba;letter-spacing:0.278px;">0 · Erstadmin</span>
<span class="t" style="left:560.75px;top:652.00px;font-size:14.56px;line-height:20px;color:#2b62e6;letter-spacing:0.044px;">Dreifelder Sporthalle</span>
<span class="t" style="left:765.55px;top:652.00px;font-size:14.56px;line-height:20px;color:#222;-webkit-text-stroke:.3px;transform:translateY(-.5px) scaleX(.78);">—</span>
<span class="t" style="left:855.00px;top:652.00px;font-size:14.56px;line-height:20px;color:#222;letter-spacing:-0.079px;">25.02</span>
<span class="t" style="left:921.95px;top:652.00px;font-size:14.56px;line-height:20px;color:#222;letter-spacing:0.341px;">11:57</span>
<span class="t" style="left:963.30px;top:651.00px;font-size:16.02px;line-height:22px;color:#222;font-family:'DejaVu Sans',sans-serif;transform:translateY(.3px) scaleX(.8);">→</span>
<span class="t" style="left:980.30px;top:652.00px;font-size:14.56px;line-height:20px;color:#222;letter-spacing:0.516px;">11:59</span>
<span class="t" style="left:1115.30px;top:652.00px;font-size:14.56px;line-height:20px;color:#222;letter-spacing:0.352px;">00:02:19</span>
<span class="t" style="left:1250.00px;top:652.00px;font-size:14.56px;line-height:20px;color:#222;-webkit-text-stroke:.3px;transform:translateY(-.5px) scaleX(.78);transform-origin:right;">—</span>
<span class="t" style="left:1292.44px;top:652.00px;font-size:14.6px;line-height:20px;color:#0a0a0a;-webkit-text-stroke:0.48px;letter-spacing:0.775px;">00:02:19</span>
<div class="a" style="left:240px;top:699.6px;width:34px;height:34px;border-radius:50%;background:#2563eb"></div>
<span class="t" style="left:252.50px;top:709.00px;font-size:12.25px;line-height:17px;color:#fff;-webkit-text-stroke:0.29px;">K</span>
<span class="t" style="left:283.71px;top:699.00px;font-size:13.1px;line-height:18px;color:#0a0a0a;-webkit-text-stroke:0.52px;letter-spacing:0.205px;">KSV</span>
<span class="t" style="left:285.25px;top:717.00px;font-size:13.52px;line-height:19px;color:#b3b3ba;letter-spacing:0.278px;">0 · Erstadmin</span>
<span class="t" style="left:560.75px;top:707.00px;font-size:14.56px;line-height:20px;color:#2b62e6;letter-spacing:0.044px;">Dreifelder Sporthalle</span>
<span class="t" style="left:765.55px;top:707.00px;font-size:14.56px;line-height:20px;color:#222;-webkit-text-stroke:.3px;transform:translateY(-.5px) scaleX(.78);">—</span>
<span class="t" style="left:855.00px;top:707.00px;font-size:14.56px;line-height:20px;color:#222;letter-spacing:-0.079px;">23.02</span>
<span class="t" style="left:921.95px;top:707.00px;font-size:14.56px;line-height:20px;color:#222;letter-spacing:0.071px;">14:32</span>
<span class="t" style="left:963.30px;top:706.00px;font-size:16.02px;line-height:22px;color:#222;font-family:'DejaVu Sans',sans-serif;transform:translateY(.3px) scaleX(.8);">→</span>
<span class="t" style="left:980.30px;top:707.00px;font-size:14.56px;line-height:20px;color:#222;letter-spacing:0.516px;">11:55</span>
<span class="t" style="left:1115.30px;top:707.00px;font-size:14.56px;line-height:20px;color:#f0565b;letter-spacing:0.352px;">45:23:01</span>
<span class="t" style="left:1250.00px;top:707.00px;font-size:14.56px;line-height:20px;color:#222;-webkit-text-stroke:.3px;transform:translateY(-.5px) scaleX(.78);transform-origin:right;">—</span>
<span class="t" style="left:1292.44px;top:707.00px;font-size:14.6px;line-height:20px;color:#ee4a50;-webkit-text-stroke:0.48px;letter-spacing:0.775px;">45:23:01</span>
<span class="t" style="left:1074.05px;top:756.00px;font-size:13.0px;line-height:18px;color:#6b6b73;letter-spacing:-0.170px;">1–10 von 10 Einträgen</span>
<svg style="left:1212px;top:759px" width="8" height="11" viewBox="0 0 8 11" fill="none" stroke="#c4c4c8" stroke-width="1.1" stroke-linecap="round" stroke-linejoin="round" aria-hidden="true"><path d="M6.6,0.8 L1,5.5 L6.6,10.2"/></svg>
<span class="t" style="left:1237.70px;top:754.00px;font-size:14.56px;line-height:20px;color:#4a4a52;">1</span>
<svg style="left:1264px;top:759px" width="8" height="11" viewBox="0 0 8 11" fill="none" stroke="#c4c4c8" stroke-width="1.1" stroke-linecap="round" stroke-linejoin="round" aria-hidden="true"><path d="M1.4,0.8 L7,5.5 L1.4,10.2"/></svg>
<div class="box" style="left:1284px;top:752px;width:88.4px;height:27px;border-radius:7px;border-color:#f0f2f6"></div>
<span class="t" style="left:1291.45px;top:758.00px;font-size:13.1px;line-height:18px;color:#26262c;letter-spacing:-0.338px;">10 / Seite</span>
<svg style="left:1351.5px;top:760px" width="10" height="8" viewBox="0 0 10 8" fill="none" stroke="#9a9aa4" stroke-width="1" stroke-linecap="round" stroke-linejoin="round" aria-hidden="true"><path d="M0.8,0.9 L4.7,6.9 L8.6,0.9"/></svg>
</main>
</body>
</html>
